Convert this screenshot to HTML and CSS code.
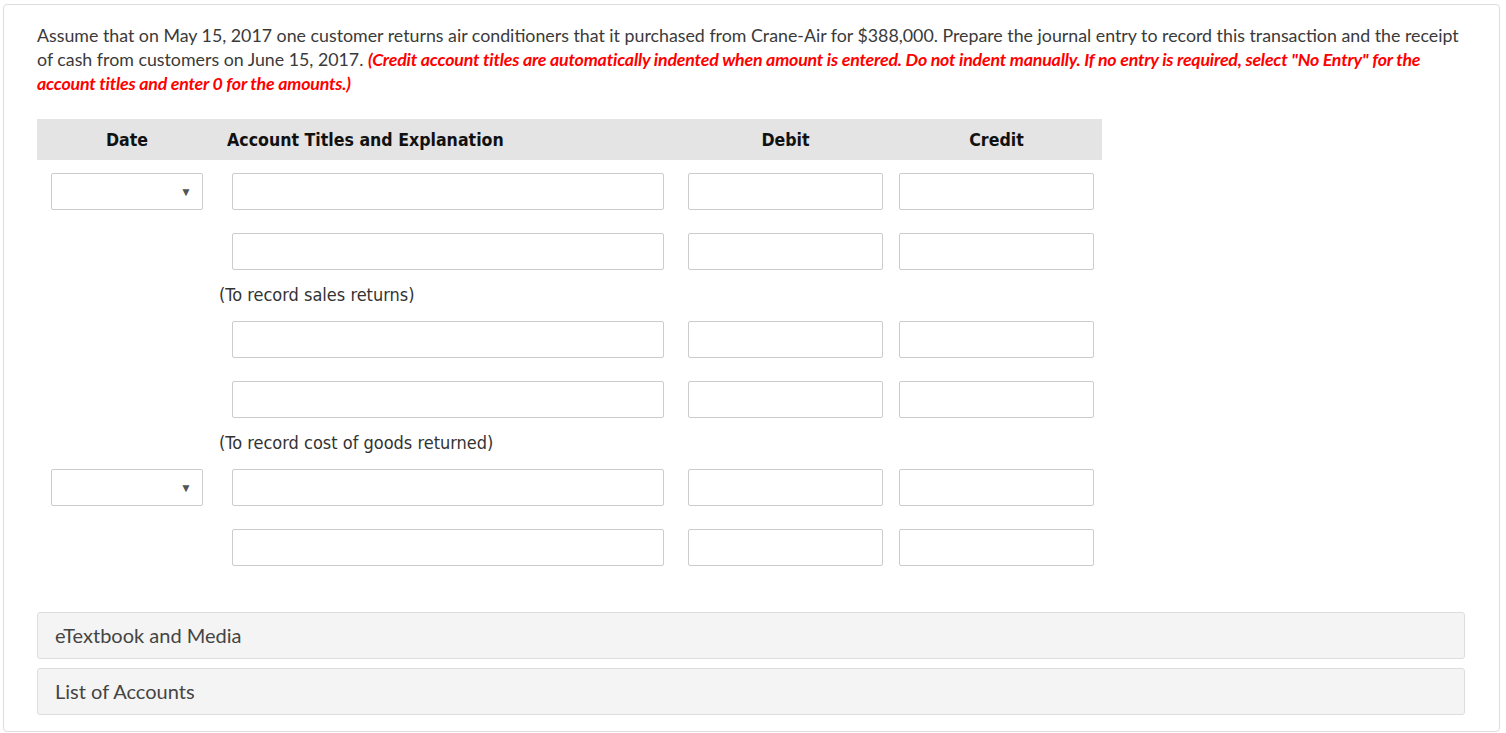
FILE: index.html
```html
<!DOCTYPE html>
<html>
<head>
<meta charset="utf-8">
<link rel="stylesheet" href="styles.css">
</head>
<body>
<div class="card">
  <p class="question">Assume that on May 15, 2017 one customer returns air conditioners that it purchased from Crane-Air for $388,000. Prepare the journal entry to record this transaction and the receipt of cash from customers on June 15, 2017. <span class="note">(Credit account titles are automatically indented when amount is entered. Do not indent manually. If no entry is required, select "No Entry" for the account titles and enter 0 for the amounts.)</span></p>

  <div class="journal">
    <div class="head">
      <div class="c-date">Date</div>
      <div class="c-acct h-acct">Account Titles and Explanation</div>
      <div class="c-deb">Debit</div>
      <div class="c-cred">Credit</div>
    </div>

    <div class="row">
      <div class="c-date select"><span class="arrow">▼</span></div>
      <div class="c-acct field"></div><div class="c-deb field"></div><div class="c-cred field"></div>
    </div>
    <div class="row">
      <div class="c-date"></div>
      <div class="c-acct field"></div><div class="c-deb field"></div><div class="c-cred field"></div>
    </div>
    <div class="explain">(To record sales returns)</div>

    <div class="row">
      <div class="c-date"></div>
      <div class="c-acct field"></div><div class="c-deb field"></div><div class="c-cred field"></div>
    </div>
    <div class="row">
      <div class="c-date"></div>
      <div class="c-acct field"></div><div class="c-deb field"></div><div class="c-cred field"></div>
    </div>
    <div class="explain">(To record cost of goods returned)</div>

    <div class="row">
      <div class="c-date select"><span class="arrow">▼</span></div>
      <div class="c-acct field"></div><div class="c-deb field"></div><div class="c-cred field"></div>
    </div>
    <div class="row">
      <div class="c-date"></div>
      <div class="c-acct field"></div><div class="c-deb field"></div><div class="c-cred field"></div>
    </div>
  </div>

  <div class="panel">eTextbook and Media</div>
  <div class="panel">List of Accounts</div>
</div>
</body>
</html>
```

FILE: styles.css
```css
html, body {
  margin: 0;
  padding: 0;
  background: #fff;
}
body {
  padding: 4px 6px 0 3px;
  font-family: "Lato", "Liberation Sans", sans-serif;
  color: #333;
}
.card {
  border: 1px solid #ddd;
  border-radius: 4px;
  padding: 18px 34px 16px 33px;
}
.question {
  margin: 0;
  font-size: 17.8px;
  line-height: 24px;
  color: #3a3a3a;
}
.note {
  color: #f00;
  font-weight: bold;
  font-style: italic;
  letter-spacing: -0.2px;
}
.journal {
  width: 1065px;
  margin-top: 24px;
}
.head, .row {
  display: flex;
  padding: 0 8px 0 14px;
}
.c-date { width: 152px; flex: none; }
.c-acct { width: 432px; flex: none; margin-left: 29px; }
.c-deb { width: 195px; flex: none; margin-left: 24px; }
.c-cred { width: 195px; flex: none; margin-left: 16px; }
.head {
  background: #e4e4e4;
  height: 41px;
  align-items: center;
  font-family: "DejaVu Sans", sans-serif;
  font-stretch: condensed;
  font-weight: bold;
  font-size: 17.6px;
  color: #111;
}
.head .c-date, .head .c-deb, .head .c-cred { text-align: center; }
.head .h-acct { margin-left: 24px; width: 437px; }
.row {
  height: 37px;
  margin-top: 23px;
}
.head + .row { margin-top: 13px; }
.explain + .row { margin-top: 16px; }
.explain {
  margin-top: 15px;
  margin-left: 182px;
  height: 20px;
  line-height: 20px;
  font-family: "DejaVu Sans", sans-serif;
  font-stretch: condensed;
  font-size: 18px;
  color: #333;
}
.field, .select {
  border: 1px solid #ccc;
  border-radius: 2px;
  box-sizing: border-box;
  height: 37px;
  background: #fff;
}
.select {
  display: flex;
  align-items: center;
  justify-content: flex-end;
  padding-right: 10px;
}
.arrow {
  font-size: 12px;
  color: #555;
}
.panel {
  background: #f4f4f4;
  border: 1px solid #ddd;
  border-radius: 3px;
  height: 45px;
  line-height: 45px;
  padding-left: 17px;
  font-size: 20px;
  color: #444;
}
.journal + .panel { margin-top: 46px; }
.panel + .panel { margin-top: 9px; }
```
